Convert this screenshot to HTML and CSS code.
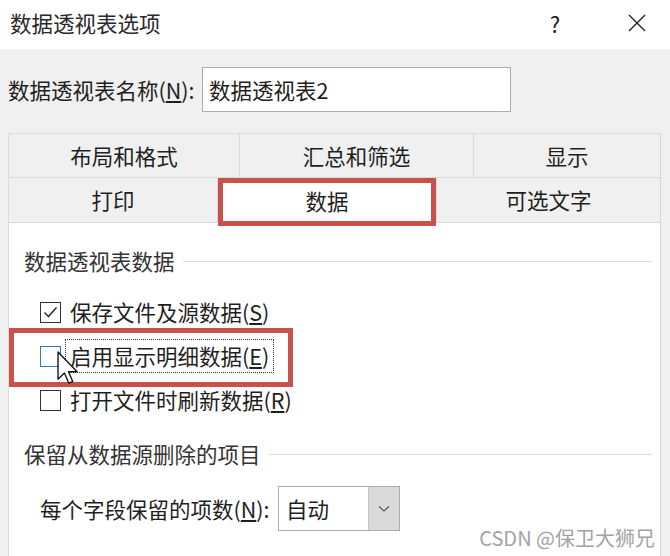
FILE: index.html
```html
<!DOCTYPE html>
<html lang="zh-CN">
<head>
<meta charset="utf-8">
<title>数据透视表选项</title>
<link rel="stylesheet" href="styles.css">
</head>
<body>
<div class="window">
  <header class="titlebar">
    <span class="title">数据透视表选项</span>
    <span class="help">?</span>
    <svg class="close" width="20" height="20" viewBox="0 0 20 20"><path d="M2 2 L18 18 M18 2 L2 18" stroke="#222" stroke-width="1.4" fill="none"/></svg>
  </header>
  <main class="body">
    <div class="name-row">
      <span class="name-label">数据透视表名称(<u>N</u>):</span>
      <div class="text-input">数据透视表2</div>
    </div>
    <div class="tabs">
      <div class="tab-row row1">
        <div class="tab">布局和格式</div>
        <div class="tab">汇总和筛选</div>
        <div class="tab last">显示</div>
      </div>
      <div class="tab-row row2">
        <div class="tab">打印</div>
        <div class="tab selected">数据</div>
        <div class="tab last">可选文字</div>
      </div>
      <section class="panel">
        <div class="group-title"><span>数据透视表数据</span><i class="rule"></i></div>
        <div class="check-list">
          <div class="check-item">
            <span class="box"><svg width="15" height="13" viewBox="0 0 15 13"><path d="M1.5 6.5 L5.5 10.5 L13.5 1.5" stroke="#333" stroke-width="1.6" fill="none"/></svg></span>
            <span class="check-label">保存文件及源数据(<u>S</u>)</span>
          </div>
          <div class="check-item focused">
            <span class="box hover"></span>
            <span class="check-label">启用显示明细数据(<u>E</u>)</span>
            <span class="annot"></span>
            <svg class="cursor" width="22" height="34" viewBox="0 0 13 20"><path d="M0.6 0.6 V16.6 L4.4 13 L7 19 L9.3 18 L6.8 12.2 H11.9 Z" fill="#fff" stroke="#111" stroke-width="0.8" stroke-linejoin="round"/></svg>
          </div>
          <div class="check-item">
            <span class="box"></span>
            <span class="check-label">打开文件时刷新数据(<u>R</u>)</span>
          </div>
        </div>
        <div class="group-title group2"><span>保留从数据源删除的项目</span><i class="rule"></i></div>
        <div class="select-row">
          <span class="select-label">每个字段保留的项数(<u>N</u>):</span>
          <div class="select">
            <span class="select-value">自动</span>
            <span class="select-btn"><svg width="12" height="8" viewBox="0 0 12 8"><path d="M1 1.5 L6 6 L11 1.5" stroke="#555" stroke-width="1.2" fill="none"/></svg></span>
          </div>
        </div>
      </section>
    </div>
  </main>
  <div class="watermark">CSDN @保卫大狮兄</div>
</div>
</body>
</html>
```
FILE: styles.css
```css
html, body {
  margin: 0;
  padding: 0;
}
body {
  width: 670px;
  height: 556px;
  overflow: hidden;
  background: #f0f0f0;
  font-family: "Noto Sans CJK SC", "Noto Sans", sans-serif;
  font-size: 21.5px;
  line-height: 30px;
  color: #1f1f1f;
}
.window {
  position: relative;
  width: 670px;
  height: 556px;
  overflow: hidden;
}
.titlebar {
  height: 49px;
  box-sizing: border-box;
  background: #fff;
  display: flex;
  align-items: center;
  padding: 0 23px 3px 10px;
}
.title {
  flex: 1;
  color: #2a2a2a;
}
.help {
  width: 30px;
  text-align: center;
  font-size: 22px;
  color: #222;
}
.close {
  margin-left: 57px;
  display: block;
}
.name-row {
  display: flex;
  align-items: center;
  padding: 18px 0 21px 8px;
}
.name-label {
  width: 194px;
  white-space: nowrap;
}
.text-input {
  width: 309px;
  height: 45px;
  box-sizing: border-box;
  border: 1px solid #abadb3;
  background: #fff;
  padding-left: 6px;
  display: flex;
  align-items: center;
}
.tabs {
  margin-left: 8px;
  width: 653px;
  box-sizing: border-box;
  border-left: 1px solid #dadde2;
  border-right: 1px solid #d6d6d6;
}
.tab-row {
  display: grid;
  height: 45px;
}
.row1 {
  grid-template-columns: 231px 234px 1fr;
  border-top: 1px solid #dadada;
  border-bottom: 1px solid #dadada;
  box-sizing: border-box;
}
.row2 {
  grid-template-columns: 209px 219px 1fr;
}
.tab {
  display: flex;
  align-items: center;
  justify-content: center;
  border-right: 1px solid #dadada;
  box-sizing: border-box;
  color: #1f1f1f;
}
.tab.last {
  border-right: none;
}
.row2 .tab {
  border-bottom: 1px solid #dadada;
}
.row2 .tab.selected {
  border-bottom: none;
  background: #fff;
  position: relative;
}
.tab.selected::after {
  content: "";
  position: absolute;
  left: 0;
  top: 0;
  right: 0;
  bottom: -3px;
  border: 5px solid #c9514b;
}
.panel {
  background: #fff;
  height: 310px;
  padding: 23px 8px 0 15px;
}
.group-title {
  display: flex;
  align-items: center;
  height: 30px;
  gap: 8px;
  color: #333;
}
.rule {
  flex: 1;
  height: 1px;
  background: #dcdcdc;
}
.check-list {
  margin-top: 14px;
  padding-left: 16px;
}
.check-item {
  position: relative;
  display: flex;
  align-items: center;
  height: 44px;
}
.box {
  width: 21px;
  height: 21px;
  box-sizing: border-box;
  border: 1.5px solid #333;
  background: #fff;
  display: flex;
  align-items: center;
  justify-content: center;
}
.box.hover {
  border-color: #3a78b0;
}
.check-label {
  margin-left: 4px;
  padding: 0 4px;
  line-height: 32px;
  border: 1px dotted transparent;
}
.focused .check-label {
  border-color: #333;
}
.annot {
  position: absolute;
  left: -31px;
  top: -6px;
  width: 284px;
  height: 59px;
  box-sizing: border-box;
  border: 5px solid #c9514b;
}
.cursor {
  position: absolute;
  left: 17px;
  top: 17px;
}
.group2 {
  margin-top: 17px;
}
.select-row {
  margin-top: 17px;
  padding-left: 16px;
  display: flex;
  align-items: center;
  height: 45px;
}
.select-label {
  width: 238px;
  white-space: nowrap;
}
.select {
  width: 122px;
  height: 45px;
  box-sizing: border-box;
  border: 1px solid #abadb3;
  background: #fff;
  display: flex;
}
.select-value {
  flex: 1;
  padding-left: 7px;
  display: flex;
  align-items: center;
}
.select-btn {
  width: 30px;
  background: #dadada;
  border-left: 1px solid #c4c4c4;
  display: flex;
  align-items: center;
  justify-content: center;
}
.watermark {
  position: absolute;
  right: 15px;
  bottom: 7px;
  font-size: 20px;
  line-height: 22px;
  color: #a3a3a3;
}
```
